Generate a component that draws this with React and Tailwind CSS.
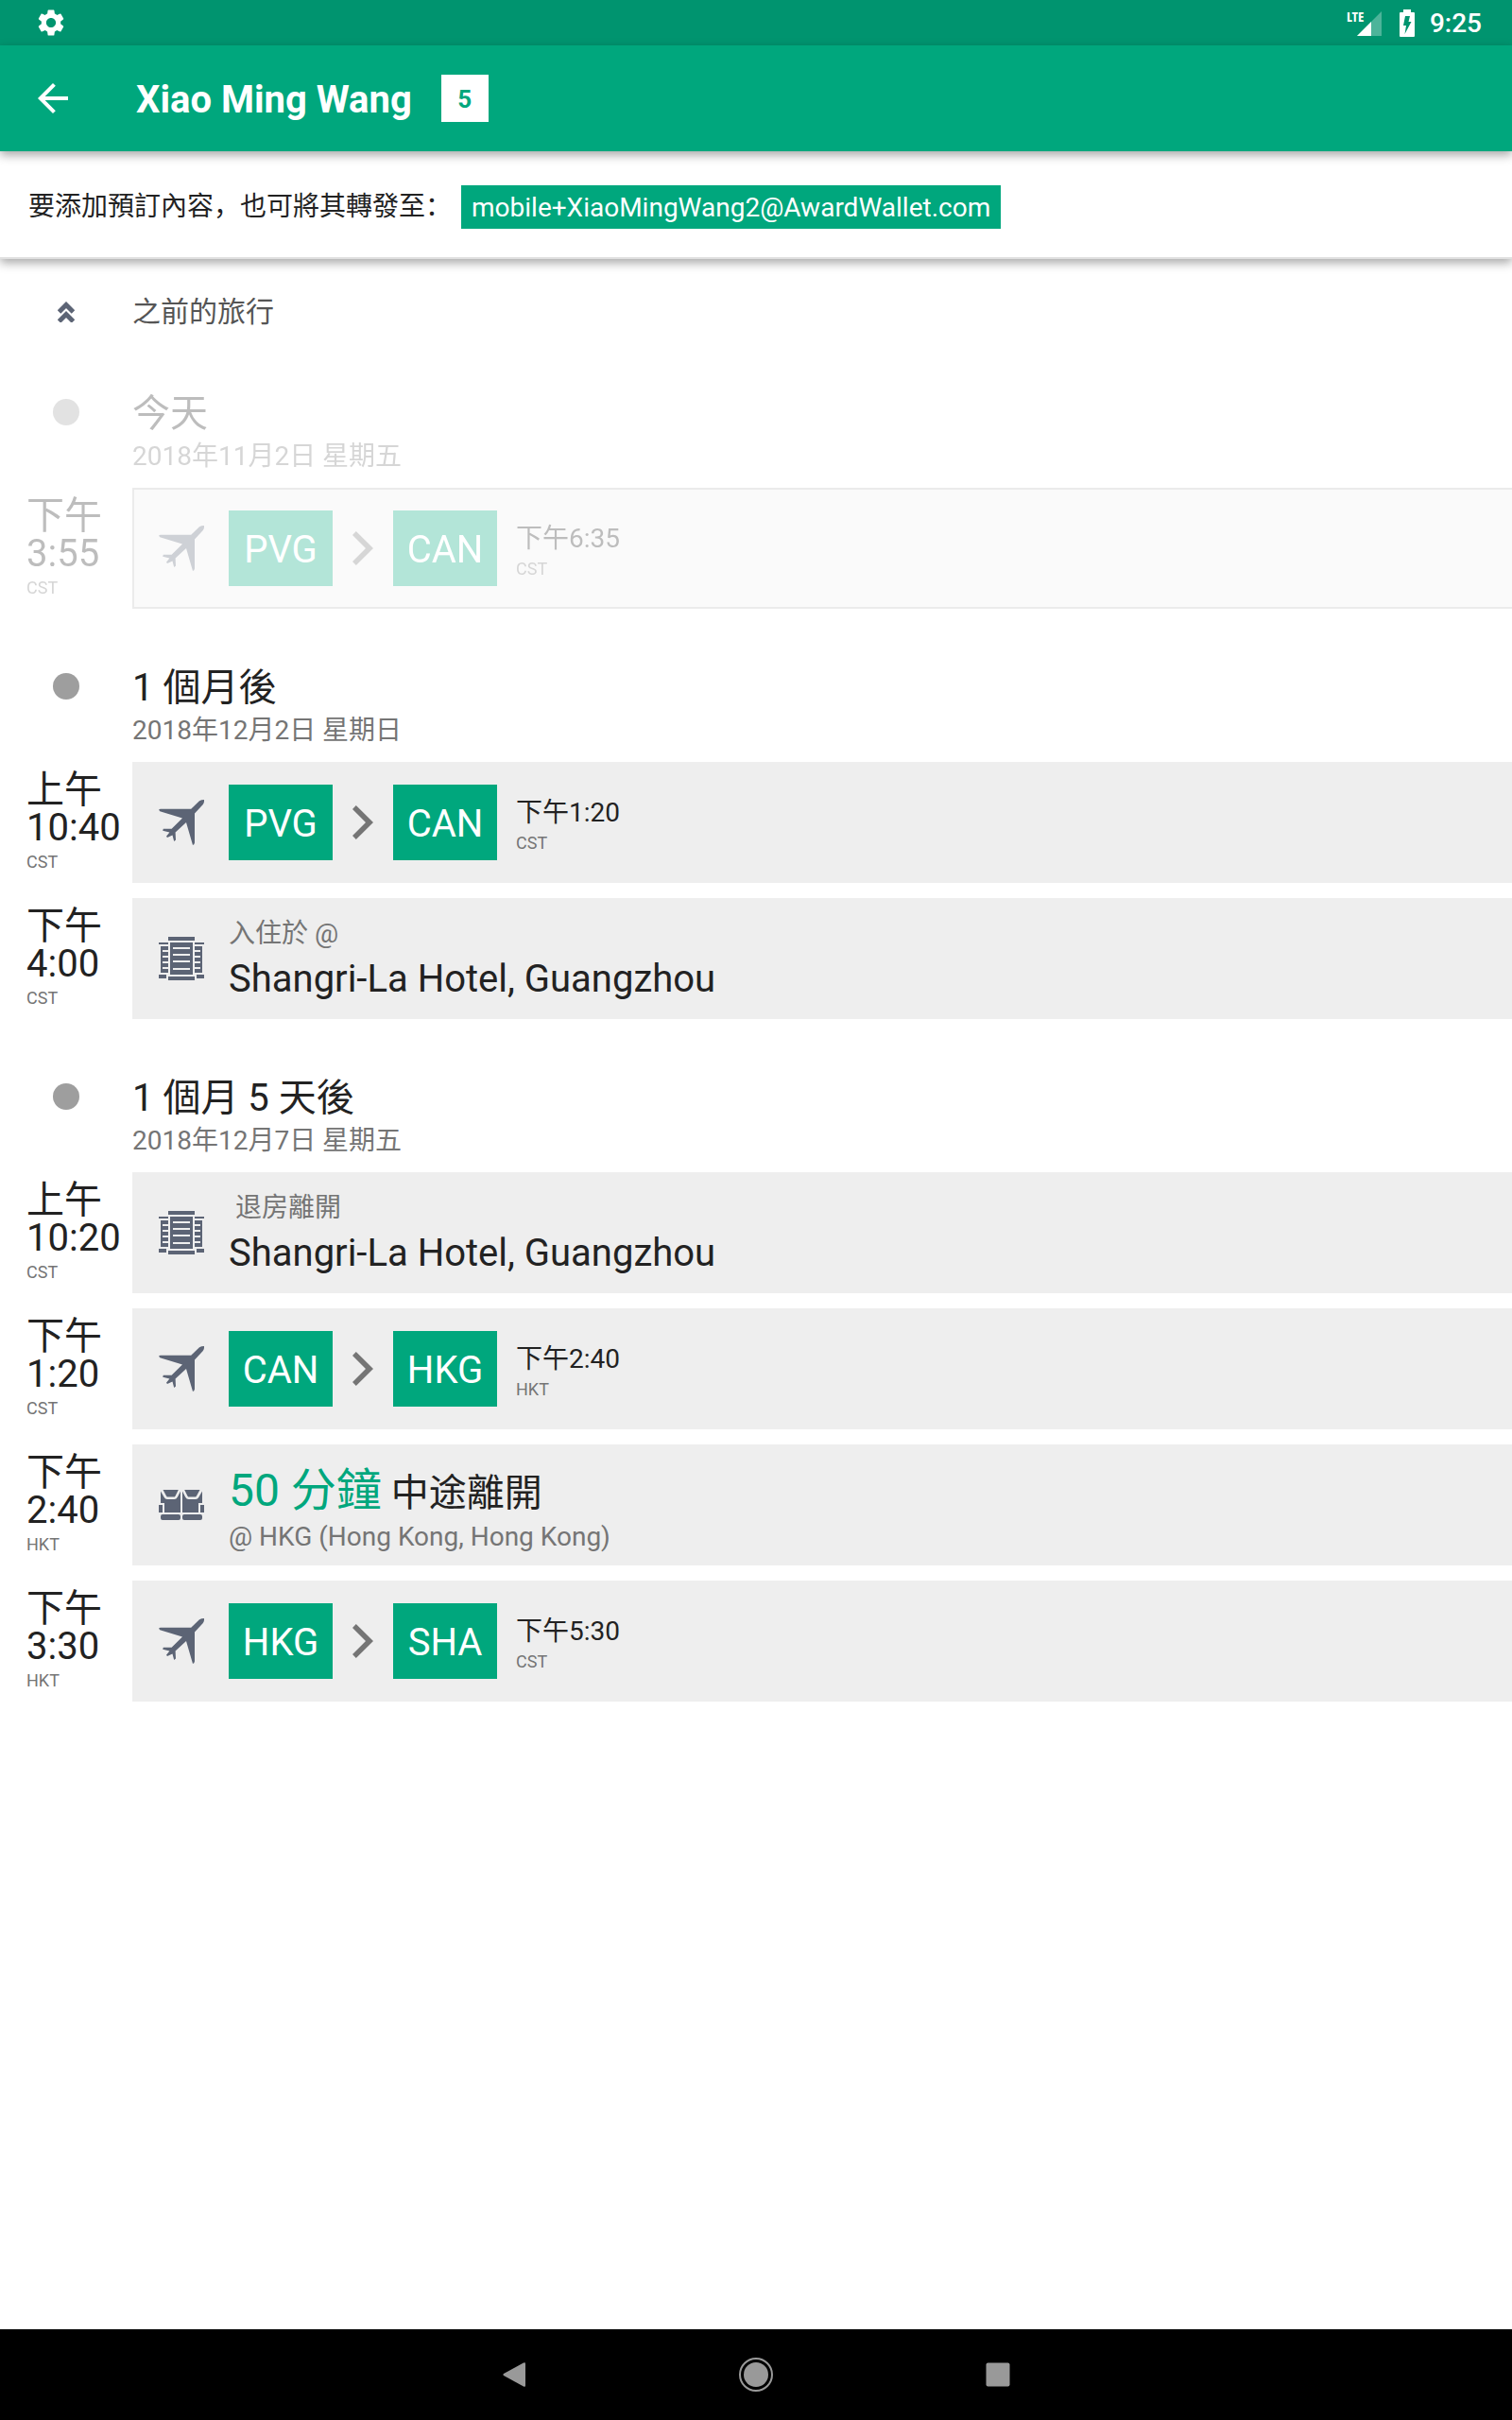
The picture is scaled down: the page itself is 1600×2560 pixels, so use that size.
/**
 * Travel timeline screen
 * Lists the upcoming trip segments grouped by day
 */
import { MdArrowBack, MdSettings } from 'react-icons/md';

const TIMELINE = [
  {
    title: '今天',
    date: '2018年11月2日 星期五',
    past: true,
    segments: [
      { type: 'flight', time: '下午3:55', zone: 'CST', from: 'PVG', to: 'CAN', arrival: '下午6:35', arrivalZone: 'CST' },
    ],
  },
  {
    title: '1 個月後',
    date: '2018年12月2日 星期日',
    segments: [
      { type: 'flight', time: '上午10:40', zone: 'CST', from: 'PVG', to: 'CAN', arrival: '下午1:20', arrivalZone: 'CST' },
      { type: 'hotel', time: '下午4:00', zone: 'CST', label: '入住於 @', name: 'Shangri-La Hotel, Guangzhou' },
    ],
  },
  {
    title: '1 個月 5 天後',
    date: '2018年12月7日 星期五',
    segments: [
      { type: 'hotel', time: '上午10:20', zone: 'CST', label: ' 退房離開', name: 'Shangri-La Hotel, Guangzhou' },
      { type: 'flight', time: '下午1:20', zone: 'CST', from: 'CAN', to: 'HKG', arrival: '下午2:40', arrivalZone: 'HKT' },
      { type: 'layover', time: '下午2:40', zone: 'HKT', duration: '50 分鐘', label: '中途離開', place: '@ HKG (Hong Kong, Hong Kong)' },
      { type: 'flight', time: '下午3:30', zone: 'HKT', from: 'HKG', to: 'SHA', arrival: '下午5:30', arrivalZone: 'CST' },
    ],
  },
];

const PlaneIcon = () => (
  <svg viewBox="0 0 48 48" className="size-12" fill="currentColor" aria-hidden="true">
    <path d="M48 0Q48.4 3 46.6 5.2L38 14.5V45.5Q37.6 47.6 36 48L29 24L17.6 34.6L18 42.6L16.2 44L14.5 37.6L9 40L8 38.8L11.4 34.4L4.2 32.8L4.8 30.8L13.6 30.8L25 19.4L1.2 12.2L0 10.4L1.6 9.7H34.2L43 1.2Q45 0 48 0Z" />
  </svg>
);

const HotelIcon = () => (
  <svg viewBox="0 0 48 48" className="size-12" fill="currentColor" aria-hidden="true">
    <path d="M10 1H38V5H10ZM0 7H10V9H0ZM38 7H48V9H38ZM0 41H8V45H0ZM40 41H48V45H40ZM10 43H38V47H10Z" />
    <path d="M2 11H10V15H4V17H10V21H4V23H10V27H4V29H10V33H4V35H10V39H2Z" />
    <path d="M46 11H38V15H44V17H38V21H44V23H38V27H44V29H38V33H44V35H38V39H46Z" />
    <path fillRule="evenodd" d="M12 7H36V41H12ZM15 12V14H33V12ZM15 19V21H33V19ZM15 26V28H33V26ZM15 34V36H33V34Z" />
  </svg>
);

const SeatsIcon = () => (
  <svg viewBox="0 0 48 48" className="size-12" fill="currentColor" aria-hidden="true">
    <path d="M4.5 8H20.8L17.6 14.4Q17 15.6 15.6 15.6H10Q8.6 15.6 8 14.4Z" />
    <path d="M2 9.5L5.6 15.8Q6.8 18 9 18H16.4Q18.6 18 19.8 15.8L23 9.5V32H6V22H2Z" />
    <path d="M43.5 8H27.2L30.4 14.4Q31 15.6 32.4 15.6H38Q39.4 15.6 40 14.4Z" />
    <path d="M46 9.5L42.4 15.8Q41.2 18 39 18H31.6Q29.4 18 28.2 15.8L25 9.5V32H42V22H46Z" />
    <path d="M0 24H4V32H0ZM44 24H48V32H44Z" />
    <rect x="2" y="34" width="21" height="6" rx="2" />
    <rect x="25" y="34" width="21" height="6" rx="2" />
  </svg>
);

const ICONS = {
  flight: PlaneIcon,
  hotel: HotelIcon,
  layover: SeatsIcon,
};

const StatusBar = () => (
  <div className="flex h-12 items-center justify-between bg-[#00946f] pr-8 pl-[37px] text-white">
    <MdSettings className="size-[34px]" />
    <div className="flex items-center">
      <svg viewBox="-4 -10 40 48" className="mr-[18px] h-12 w-10" fill="currentColor" role="img" aria-label="LTE">
        <path d="M35 2V28H9Z" opacity="0.3" />
        <path d="M24 13V28H9Z" />
        <text x="-2" y="13" fontSize="15" fontWeight="700" fontFamily="Open Sans Condensed, Roboto Condensed, Roboto, sans-serif">LTE</text>
      </svg>
      <svg viewBox="0 0 16 29" className="mr-4 h-[29px] w-4" aria-hidden="true">
        <path d="M4 0H12V3H15Q16 3 16 4V28Q16 29 15 29H1Q0 29 0 28V4Q0 3 1 3H4Z" fill="currentColor" />
        <path d="M6 7H11L9.5 13H12.5L5.5 26L7 17H4Z" fill="#00946f" />
      </svg>
      <span className="pt-0.5 text-[28px] leading-8 font-medium">9:25</span>
    </div>
  </div>
);

const AppBar = () => (
  <header className="relative z-10 flex h-28 items-center bg-[#00a77d] pl-8 text-white shadow-[0_4px_10px_rgba(0,0,0,0.35)]">
    <button type="button" aria-label="Back" className="mr-16">
      <MdArrowBack className="size-12" />
    </button>
    <h1 className="mr-[31px] pt-1 text-[40px] leading-[48px] font-bold">Xiao Ming Wang</h1>
    <span className="flex size-[50px] items-center justify-center bg-white pt-0.5 text-[26px] leading-8 font-bold text-[#00a77d]">5</span>
  </header>
);

const ForwardBar = () => (
  <div className="flex h-[114px] items-center border-b-2 border-[#e0e0e0] bg-white pt-1.5 pl-[30px] text-[28px] leading-8 text-[#222] shadow-[0_4px_10px_rgba(0,0,0,0.35)]">
    <span className="mr-[10px]">要添加預訂內容，也可將其轉發至：</span>
    <a href="mailto:mobile+XiaoMingWang2@AwardWallet.com" className="bg-[#00a77d] px-[11px] pt-2 pb-1.5 text-white">
      mobile+XiaoMingWang2@AwardWallet.com
    </a>
  </div>
);

const AirportCode = ({ code }) => (
  <span className="flex h-20 w-[110px] items-center justify-center bg-[#00a77d] pt-1 text-[40px] leading-[48px] text-white">
    {code}
  </span>
);

const SegmentBody = ({ segment }) => {
  if (segment.type === 'flight') {
    return (
      <div className="flex items-center">
        <AirportCode code={segment.from} />
        <svg viewBox="0 0 22 36" className="mx-[21px] h-9 w-[22px]" fill="#757575" aria-hidden="true">
          <path d="M3.8 0L22 18L3.8 36L0 32L14 18L0 4Z" />
        </svg>
        <AirportCode code={segment.to} />
        <div className="ml-5 pt-2">
          <div className="text-[28px] leading-8 text-[#222]">{segment.arrival}</div>
          <div className="mt-1 text-lg leading-6 text-[#757575]">{segment.arrivalZone}</div>
        </div>
      </div>
    );
  }

  if (segment.type === 'hotel') {
    return (
      <div className="pt-1">
        <div className="text-[28px] leading-8 whitespace-pre text-[#757575]">{segment.label}</div>
        <div className="mt-2 text-[40px] leading-[48px] text-[#222]">{segment.name}</div>
      </div>
    );
  }

  return (
    <div className="pt-1.5">
      <div className="text-[40px] leading-[56px] text-[#222]">
        <span className="text-5xl leading-[56px] text-[#00a77d]">{segment.duration}</span> {segment.label}
      </div>
      <div className="mt-0.5 text-[28px] leading-8 text-[#757575]">{segment.place}</div>
    </div>
  );
};

const SegmentRow = ({ segment, past }) => {
  const Icon = ICONS[segment.type];

  return (
    <li className="flex h-32">
      {/* narrow column, so the hour wraps below the day period */}
      <div className="w-[140px] shrink-0 pt-[10px] pr-2 pl-7 text-[40px] leading-10 text-[#222]">
        <div>{segment.time}</div>
        <div className="mt-1 text-lg leading-6 text-[#757575]">{segment.zone}</div>
      </div>
      <div className={`flex flex-1 items-center bg-[#eee] ${past ? 'border-2 border-r-0 border-[#bdbdbd] pl-[26px]' : 'pl-7'}`}>
        <span className="mr-[26px] text-[#5c6475]">
          <Icon />
        </span>
        <SegmentBody segment={segment} />
      </div>
    </li>
  );
};

const DaySection = ({ day }) => (
  <section className={day.past ? 'opacity-30' : ''}>
    <div className="flex pt-[58px] pb-[17px]">
      <div className="flex h-12 w-[140px] shrink-0 items-center justify-center">
        <span className="size-7 rounded-full bg-[#9e9e9e]" />
      </div>
      <div>
        <h2 className="text-[40px] leading-[52px] text-[#222]">{day.title}</h2>
        <p className="mt-[3px] text-[28px] leading-8 text-[#757575]">{day.date}</p>
      </div>
    </div>
    <ul className="flex flex-col gap-4">
      {day.segments.map((segment, index) => (
        <SegmentRow key={index} segment={segment} past={day.past} />
      ))}
    </ul>
  </section>
);

const NavBar = () => (
  <nav className="flex h-24 items-center justify-center gap-[208px] bg-black text-[#999]">
    <button type="button" aria-label="Back">
      <svg viewBox="0 0 48 48" className="size-12" fill="currentColor">
        <path d="M34 11.5Q36 10.5 36 12.5V35.5Q36 37.5 34 36.5L13 25Q11.5 24 13 23Z" />
      </svg>
    </button>
    <button type="button" aria-label="Home">
      <svg viewBox="0 0 48 48" className="size-12">
        <circle cx="24" cy="24" r="17" fill="none" stroke="currentColor" strokeWidth="2" />
        <circle cx="24" cy="24" r="13" fill="currentColor" />
      </svg>
    </button>
    <button type="button" aria-label="Recent apps">
      <svg viewBox="0 0 48 48" className="size-12" fill="currentColor">
        <rect x="11.5" y="11.5" width="25" height="25" rx="2" />
      </svg>
    </button>
  </nav>
);

export default function App() {
  return (
    <div className="flex min-h-screen flex-col bg-white font-['Roboto','Noto_Sans_CJK_SC',sans-serif]">
      <StatusBar />
      <AppBar />
      <ForwardBar />
      <main className="flex-1 pt-8">
        <button type="button" className="flex h-12 w-full items-center text-left">
          <span className="flex w-[140px] shrink-0 justify-center text-[#5c6475]">
            <svg viewBox="0 0 18 22" className="h-[22px] w-[18px]" fill="none" stroke="currentColor" strokeWidth="5" aria-hidden="true">
              <path d="M1.5 11L9 3.5L16.5 11M1.5 21L9 13.5L16.5 21" />
            </svg>
          </span>
          <span className="text-3xl leading-9 text-[#555]">之前的旅行</span>
        </button>
        {TIMELINE.map((day) => (
          <DaySection key={day.date} day={day} />
        ))}
      </main>
      <NavBar />
    </div>
  );
}
